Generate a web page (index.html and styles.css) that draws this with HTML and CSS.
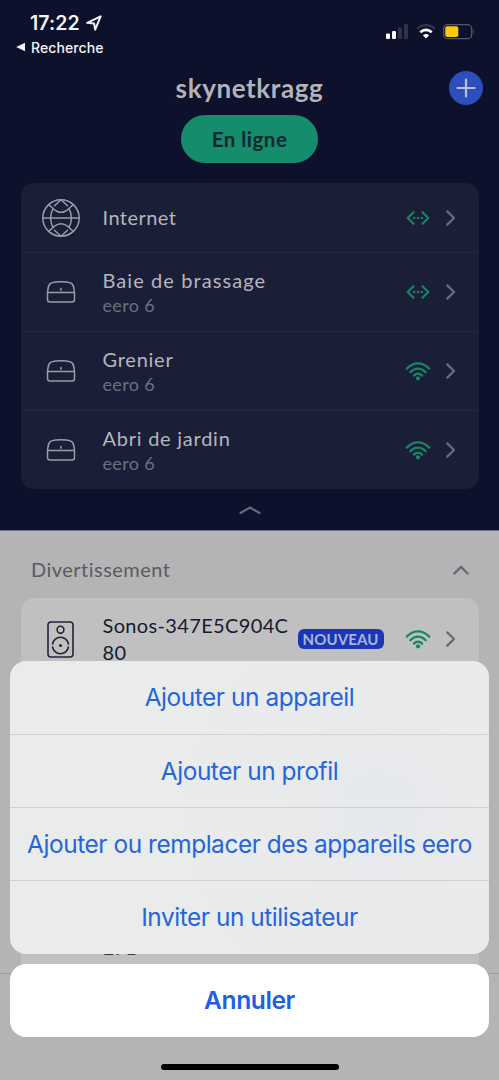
FILE: index.html
```html
<!DOCTYPE html>
<html lang="fr">
<head>
<meta charset="utf-8">
<meta name="viewport" content="width=device-width, initial-scale=1">
<title>skynetkragg</title>
<link rel="stylesheet" href="styles.css">
</head>
<body>
<svg class="defs" width="0" height="0" aria-hidden="true">
  <symbol id="eero" viewBox="0 0 30 24">
    <path d="M1.500 12.800C2 7 2.600 3.900 5.500 2.900C10 1.400 20 1.400 24.500 2.900C27.400 3.900 28 7 28.500 12.800V19.500Q28.500 22 26 22H4Q1.500 22 1.500 19.500ZM1.600 12.600H28.400M15 8.500V10.200"/>
  </symbol>
  <symbol id="wired" viewBox="0 0 24 14">
    <path d="M7.500 1.200L1.700 7L7.500 12.800M16.500 1.200L22.300 7L16.500 12.800"/>
    <path class="dots" d="M8.200 7H8.210M12 7H12.010M15.800 7H15.810"/>
  </symbol>
  <symbol id="wifi" viewBox="0 0 26 20">
    <path d="M1.800 7.600C8.400 0.600 17.600 0.600 24.200 7.600M5.300 11.200C9.900 6.400 16.100 6.400 20.700 11.200M8.900 14.600C11.400 12 14.600 12 17.100 14.600"/>
    <circle cx="13" cy="17.300" r="2.100"/>
  </symbol>
  <symbol id="chevron" viewBox="0 0 10 16">
    <path d="M1.300 1.400L8 8L1.300 14.600"/>
  </symbol>
</svg>
<div class="screen">
  <header class="network">
    <div class="status">
      <div class="status-left">
        <div class="clock"><span class="time">17:22</span>
          <svg class="location" viewBox="0 0 16 16"><path d="M1.200 7.800L14.600 1.300L9.200 14.600L8.100 8.600Z"/></svg>
        </div>
        <div class="back"><svg viewBox="0 0 10 10"><path d="M0.200 5L9 0.800V9.200Z"/></svg><span>Recherche</span></div>
      </div>
      <div class="status-right">
        <svg class="signal" viewBox="0 0 23 15"><rect x="0" y="9.500" width="4" height="5.500" rx="1"/><rect x="6" y="7" width="4" height="8" rx="1"/><rect class="off" x="12" y="3.500" width="4" height="11.500" rx="1"/><rect class="off" x="18" y="0" width="4" height="15" rx="1"/></svg>
        <svg class="wifi-status" viewBox="0 0 20 15"><path class="off" d="M1.200 4.800C6.200 0 13.800 0 18.800 4.800"/><path d="M4.300 8.200C7.600 5.100 12.400 5.100 15.700 8.200"/><path class="tip" d="M6.900 11.200Q10 8.700 13.100 11.200L10 14.500Z"/></svg>
        <svg class="battery" viewBox="0 0 32 16"><rect class="case" x="0.700" y="0.700" width="28" height="14" rx="4"/><rect class="charge" x="2.300" y="2.300" width="13" height="10.800" rx="2"/><path class="cap" d="M30 5.500Q32 7.700 30 10Z"/></svg>
      </div>
    </div>
    <div class="title-row"><h1>skynetkragg</h1>
      <span class="add"><svg viewBox="0 0 20 20"><path d="M10 1.500V18.500M1.500 10H18.500"/></svg></span>
    </div>
    <div class="pill">En ligne</div>
    <div class="card nodes">
      <div class="row first">
        <span class="glyph"><svg class="globe" viewBox="0 0 38 38"><circle cx="19" cy="19" r="18.200"/><path d="M0.800 19H37.200M6.800 5.800L12.500 10.800Q19 15.800 25.500 10.800L31.200 5.800M6.800 32.200L12.500 27.200Q19 22.200 25.500 27.200L31.200 32.200M19 0.800L12.500 6.800M11 9.500Q6.200 19 11 28.500M12.500 31.200L19 37.200M19 0.800L25.500 6.800M27 9.500Q31.800 19 27 28.500M25.500 31.200L19 37.200"/></svg></span>
        <div class="label"><span class="name internet">Internet</span></div>
        <svg class="link wired"><use href="#wired"/></svg><svg class="chev"><use href="#chevron"/></svg>
      </div>
      <div class="row">
        <span class="glyph"><svg class="eero"><use href="#eero"/></svg></span>
        <div class="label"><span class="name rack">Baie de brassage</span><span class="model">eero 6</span></div>
        <svg class="link wired"><use href="#wired"/></svg><svg class="chev"><use href="#chevron"/></svg>
      </div>
      <div class="row">
        <span class="glyph"><svg class="eero"><use href="#eero"/></svg></span>
        <div class="label"><span class="name">Grenier</span><span class="model">eero 6</span></div>
        <svg class="link wifi"><use href="#wifi"/></svg><svg class="chev"><use href="#chevron"/></svg>
      </div>
      <div class="row">
        <span class="glyph"><svg class="eero"><use href="#eero"/></svg></span>
        <div class="label"><span class="name">Abri de jardin</span><span class="model">eero 6</span></div>
        <svg class="link wifi"><use href="#wifi"/></svg><svg class="chev"><use href="#chevron"/></svg>
      </div>
    </div>
    <svg class="collapse" viewBox="0 0 22 10"><path d="M1.500 8L11 2.500L20.500 8"/></svg>
  </header>
  <main class="devices">
    <div class="section"><h2>Divertissement</h2><svg viewBox="0 0 16 10"><path d="M1.300 8.500L8 1.800L14.700 8.500"/></svg></div>
    <div class="card device-list">
      <div class="device">
        <span class="glyph"><svg class="speaker" viewBox="0 0 27 37"><rect x="1" y="1" width="25" height="35" rx="3"/><circle cx="13.500" cy="8.700" r="3.400"/><path d="M5.600 23A8 8 0 0 1 21.400 23M5.600 26A8 8 0 0 0 21.400 26"/><circle class="dot" cx="13.500" cy="24.500" r="1.500"/></svg></span>
        <div class="device-name">Sonos-347E5C904C<br>80</div>
        <span class="badge">NOUVEAU</span>
        <svg class="link wifi"><use href="#wifi"/></svg><svg class="chev"><use href="#chevron"/></svg>
      </div>
      <div class="device-tail">E7B</div>
    </div>
    <div class="tabbar"></div>
  </main>
</div>
<div class="overlay">
  <div class="sheet">
    <div class="action">Ajouter un appareil</div>
    <div class="action">Ajouter un profil</div>
    <div class="action">Ajouter ou remplacer des appareils eero</div>
    <div class="action">Inviter un utilisateur</div>
  </div>
  <div class="cancel">Annuler</div>
  <div class="home"></div>
</div>
</body>
</html>
```
FILE: styles.css
```css
* { box-sizing: border-box; }
body { margin: 0; font-family: Lato, sans-serif; background: #b4b4b4; overflow: hidden; }
.defs { position: absolute; }
svg { display: block; fill: none; stroke-linecap: round; stroke-linejoin: round; flex: none; }
h1, h2 { margin: 0; }
.screen { position: relative; width: 499px; height: 1080px; overflow: hidden; display: flex; flex-direction: column; }
.network { height: 531px; flex: none; background: #0d112b; border-bottom: 1px solid #6c7086; display: flex; flex-direction: column; align-items: center; }
.status { width: 100%; height: 66px; flex: none; display: flex; justify-content: space-between; padding: 12px 24px 0 16px; font-family: Inter, sans-serif; color: #f5f5f9; }
.clock { display: flex; height: 22px; align-items: center; padding-left: 14px; gap: 6px; }
.time { font-size: 19.500px; font-weight: 600; line-height: 22px; letter-spacing: .1px; }
.location { width: 16px; height: 16px; stroke: #f5f5f9; stroke-width: 2; }
.back { display: flex; align-items: center; gap: 5px; margin-top: 4px; height: 18px; font-size: 14px; font-weight: 500; letter-spacing: .1px; }
.back svg { width: 10px; height: 10px; fill: #f5f5f9; }
.status-right { display: flex; padding-top: 12px; }
.signal { width: 23px; height: 15px; fill: #fff; }
.signal .off { fill: #303249; }
.wifi-status { width: 20px; height: 15px; margin-left: 7px; stroke: #fff; stroke-width: 2.600; }
.wifi-status .off { stroke: #303249; }
.wifi-status path { stroke-linecap: butt; }
.wifi-status .tip { fill: #fff; stroke: none; }
.battery { width: 32px; height: 16px; margin-left: 7px; }
.case { stroke: #55576a; stroke-width: 1.300; }
.charge { fill: #fbc90e; }
.cap { fill: #55576a; }
.title-row { width: 100%; height: 49px; flex: none; position: relative; display: flex; justify-content: center; }
h1 { font-size: 26px; line-height: 30px; margin-top: 7px; font-weight: 700; letter-spacing: .6px; color: #b3b3b8; }
.add { position: absolute; right: 16px; top: 5px; width: 34px; height: 34px; border-radius: 50%; background: #2c4fbd; display: grid; place-items: center; }
.add svg { width: 20px; height: 20px; stroke: #b9c0d7; stroke-width: 2.200; }
.pill { width: 137px; height: 48px; flex: none; border-radius: 24px; background: #158c6b; color: #0c2734; font-size: 20.500px; line-height: 48px; font-weight: 700; letter-spacing: .5px; text-align: center; }
.card { width: 458px; margin: 0 auto; border-radius: 13px; }
.nodes { height: 306px; margin-top: 20px; flex: none; background: #1b1e37; }
.row { height: 79px; border-top: 1px solid #23273f; display: flex; align-items: center; padding-right: 23px; }
.row.first { height: 69px; border-top: 0; }
.glyph { width: 80px; margin-right: 2px; display: flex; justify-content: center; flex: none; }
.globe { width: 38px; height: 38px; stroke: #9b9ca9; stroke-width: 1.500; }
.eero { width: 30px; height: 24px; stroke: #9b9ca9; stroke-width: 1.500; }
.label { flex: 1; display: flex; flex-direction: column; }
.name { font-size: 20px; line-height: 26px; letter-spacing: .75px; color: #b5b5bc; }
.name.internet { letter-spacing: .45px; line-height: 28px; margin-top: -2px; }
.name.rack { letter-spacing: 1.080px; }
.model { font-size: 18px; line-height: 24px; letter-spacing: .35px; color: #6d6f80; }
.link { stroke: #168666; stroke-width: 2.300; }
.wired { width: 24px; height: 14px; margin-right: 16px; stroke-width: 2.100; }
.dots { stroke-width: 2.500; }
.wifi { width: 26px; height: 20px; margin-right: 15px; }
#wifi circle { fill: #168666; stroke: none; }
.chev { width: 10px; height: 16px; stroke: #696b7b; stroke-width: 2.300; }
.collapse { width: 22px; height: 10px; margin-top: 16px; stroke: #686a7c; stroke-width: 2.100; }
.devices { flex: 1; background: #b4b4b4; display: flex; flex-direction: column; position: relative; }
.section { height: 67px; flex: none; display: flex; justify-content: space-between; padding: 25px 30px 0 31px; }
h2 { font-size: 20px; line-height: 26px; font-weight: 400; letter-spacing: .48px; color: #585b65; }
.section svg { width: 16px; height: 10px; margin-top: 9px; stroke: #686b79; stroke-width: 2.400; }
.device-list { height: 375px; flex: none; background: #c0c0c1; border-radius: 13px 13px 0 0; overflow: hidden; }
.device { height: 82px; display: flex; align-items: center; padding-right: 23px; }
.speaker { width: 27px; height: 37px; stroke: #20243a; stroke-width: 1.600; }
.speaker .dot { fill: #20243a; stroke: none; }
.device-name { flex: 1; white-space: nowrap; font-size: 20px; line-height: 27px; letter-spacing: .35px; color: #171a2e; }
.badge { width: 86px; height: 20px; border-radius: 6px; background: #1b36b9; color: #aab7d7; font-size: 15px; font-weight: 700; line-height: 20px; text-align: center; letter-spacing: .1px; margin-right: 21px; flex: none; }
.device .chev { stroke: #686b79; }
.device-tail { padding: 254px 0 0 82px; font-size: 20px; line-height: 26px; color: #34374a; }
.tabbar { border-top: 1px solid #9c9c9e; flex: 1; }
.overlay { position: absolute; left: 0; top: 0; width: 499px; height: 1080px; display: flex; flex-direction: column; justify-content: flex-end; align-items: center; padding: 0 10px 10.500px; font-family: Inter, sans-serif; }
.sheet { width: 479px; height: 293px; border-radius: 16px; background: radial-gradient(circle at 370px 150px, #e5e8ee 0, #e9eaeb 80px, #eaebeb 200px); overflow: hidden; }
.action { height: 73.330px; line-height: 73px; text-align: center; font-size: 24.400px; letter-spacing: -.43px; color: #2465dc; border-top: 1px solid #cfd1d3; white-space: nowrap; }
.action:first-child { border-top: 0; }
.cancel { width: 479px; height: 73px; margin-top: 10px; border-radius: 16px; background: #fff; color: #1b60e5; font-size: 24.600px; font-weight: 600; line-height: 73px; text-align: center; letter-spacing: -.4px; }
.home { width: 178px; height: 6px; margin-top: 27px; border-radius: 3px; background: #000; }
```
